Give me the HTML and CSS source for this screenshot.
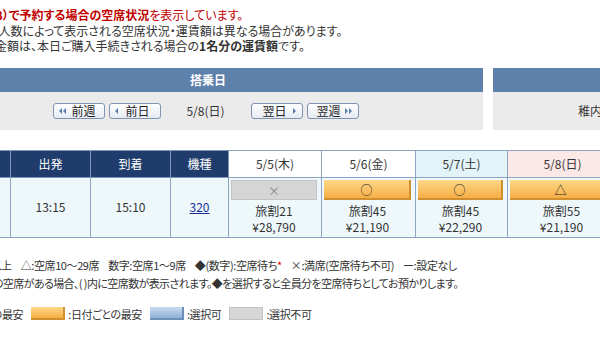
FILE: index.html
```html
<!DOCTYPE html>
<html>
<head>
<meta charset="utf-8" />
<title>空席状況</title>
<link rel="stylesheet" href="styles.css">
</head>
<body>
<div class="notes">
    <p class="lead l1"><b>（ANA SKY WEB）で予約する場合の空席状況</b>を表示しています。</p>
    <p class="l2">ご搭乗人数によって表示される空席状況・運賃額は異なる場合があります。</p>
    <p class="l3">表示金額は、本日ご購入手続きされる場合の<b>1名分の運賃額</b>です。</p>
</div>

<div class="datebar">
    <div class="panel main">
        <div class="panel-head">搭乗日</div>
        <div class="panel-body">
            <a class="btn prev" href="#"><i class="tri left"></i><i class="tri left"></i><span>前週</span></a>
            <a class="btn prev" href="#"><i class="tri left"></i><span>前日</span></a>
            <span class="cur">5/8(日)</span>
            <a class="btn next" href="#"><span>翌日</span><i class="tri right"></i></a>
            <a class="btn next" href="#"><span>翌週</span><i class="tri right"></i><i class="tri right"></i></a>
        </div>
    </div>
    <div class="panel side">
        <div class="panel-head"></div>
        <div class="panel-body route">稚内 → 東京(羽田)</div>
    </div>
</div>

<table class="avail">
    <colgroup>
        <col style="width:90px"><col style="width:80px"><col style="width:80px"><col style="width:58px">
        <col style="width:93px"><col style="width:94px"><col style="width:92px"><col style="width:110px">
    </colgroup>
    <tr>
        <th class="dark">便名</th>
        <th class="dark">出発</th>
        <th class="dark">到着</th>
        <th class="dark">機種</th>
        <th class="day">5/5(木)</th>
        <th class="day">5/6(金)</th>
        <th class="day sat">5/7(土)</th>
        <th class="day sun">5/8(日)</th>
    </tr>
    <tr>
        <td>ANA574</td>
        <td>13:15</td>
        <td>15:10</td>
        <td><a class="plane" href="#">320</a></td>
        <td class="fare"><div class="seat none">×</div><div>旅割21</div><div>¥28,790</div></td>
        <td class="fare"><div class="seat">○</div><div>旅割45</div><div>¥21,190</div></td>
        <td class="fare"><div class="seat">○</div><div>旅割45</div><div>¥22,290</div></td>
        <td class="fare"><div class="seat">△</div><div>旅割55</div><div>¥21,190</div></td>
    </tr>
</table>

<div class="legend">
    <p class="lg1"><span>○:空席30席以上</span><span>△:空席10〜29席</span><span>数字:空席1〜9席</span><span>◆(数字):空席待ち<em>*</em></span><span>×:満席(空席待ち不可)</span><span>ー:設定なし</span></p>
    <p class="lg2">*空席待ちの空席がある場合、( )内に空席数が表示されます。◆を選択すると全員分を空席待ちとしてお預かりします。</p>
    <p class="lg3"><span class="pre">期間中の最安</span><i class="box orange"></i><span>:日付ごとの最安</span><i class="box blue"></i><span>:選択可</span><i class="box gray"></i><span>:選択不可</span></p>
</div>
</body>
</html>
```

FILE: styles.css
```css
*{ padding:0; margin:0; box-sizing:border-box; }
body{
    font-family: "Noto Sans CJK JP", sans-serif;
    font-size: 12px;
    color: #333;
    overflow: hidden;
    width: 600px;
    height: 343px;
    font-feature-settings: "palt";
}
a{ text-decoration:none; }

/* notes */
.notes{
    padding-top: 7px;
    line-height: 15.5px;
    white-space: nowrap;
}
.lead{ color:#c00000; }
.l1{ text-indent:-82px; }
.l2{ text-indent:-36px; }
.l3{ text-indent:-29px; }

/* date bar */
.datebar{
    display:flex;
    margin-top:14px;
    white-space:nowrap;
}
.panel-head{
    height:24px;
    line-height:24px;
    background:#5e81ab;
    color:#fff;
    font-weight:bold;
    text-align:center;
}
.panel-body{
    height:38px;
    background:#ebebeb;
    display:flex;
    align-items:center;
    justify-content:center;
}
.main{
    width:550px;
    margin-left:-67px;
    flex:none;
}
.side{
    width:200px;
    margin-left:10px;
    flex:none;
}
.route{
    justify-content:flex-start;
    padding-left:85px;
}
.btn{
    display:flex;
    align-items:center;
    height:16px;
    width:52px;
    padding:0 5px;
    border:1px solid #8093b2;
    border-radius:3px;
    background:linear-gradient(#ffffff, #e6ebf2);
    color:#222;
    margin-right:4px;
}
.btn span{ flex:1; text-align:center; }
.tri{
    width:0; height:0;
    border-top:3px solid transparent;
    border-bottom:3px solid transparent;
    margin-right:1px;
}
.tri.left{ border-right:3px solid #5a7db0; }
.tri.right{ border-left:3px solid #5a7db0; }
.cur{ margin:0 26px 0 21px; }

/* table */
.avail{
    margin-top:20px;
    margin-left:-80px;
    border-collapse:collapse;
    table-layout:fixed;
    width:697px;
}
.avail th, .avail td{
    border:1px solid #8da3c2;
    text-align:center;
    font-weight:normal;
    white-space:nowrap;
}
.avail th{ height:27px; }
.avail th.dark{
    background:#1f3c6c;
    color:#fff;
    border-color:#7f95b8;
}
.avail th.day{ background:#fff; color:#333; }
.avail th.sat{ background:#e3f4f9; }
.avail th.sun{ background:#fce9e7; }
.avail td{
    height:60px;
    background:#eef7fa;
    line-height:16px;
}
.plane{ color:#1a2f9c; text-decoration:underline; }
.fare{ vertical-align:top; padding:2px 4px 0 2px; }
.seat{
    height:20px;
    line-height:19px;
    margin-bottom:3px;
    background:linear-gradient(#fdd888, #f6ae45);
    border-right:2px solid #d0902f;
    border-bottom:2px solid #d0902f;
    color:#222;
}
.seat.none{
    background:#d5d5d5;
    border:1px solid #c4c4c4;
    color:#888;
}

/* legend */
.legend{
    margin-top:18px;
    font-size:11px;
    line-height:18px;
    letter-spacing:-0.4px;
    white-space:nowrap;
}
.lg1{ margin-left:-66px; }
.lg1 span{ margin-right:9px; }
.lg1 em{ color:#d00; font-style:normal; }
.lg2{ margin-left:-52px; letter-spacing:-0.6px; }
.lg3{
    margin-top:13px;
    margin-left:-40px;
    display:flex;
    align-items:center;
}
.box{
    width:34px;
    height:13px;
    margin:0 3px 0 8px;
}
.box.orange{
    background:linear-gradient(#fdd888, #f6ae45);
    border-right:2px solid #d0902f;
    border-bottom:2px solid #d0902f;
}
.box.blue{
    background:linear-gradient(#c8dbef, #8eb0d6);
    border-right:2px solid #6d8fb8;
    border-bottom:2px solid #6d8fb8;
}
.box.gray{
    background:#d6d6d6;
    border:1px solid #c2c2c2;
}
```
